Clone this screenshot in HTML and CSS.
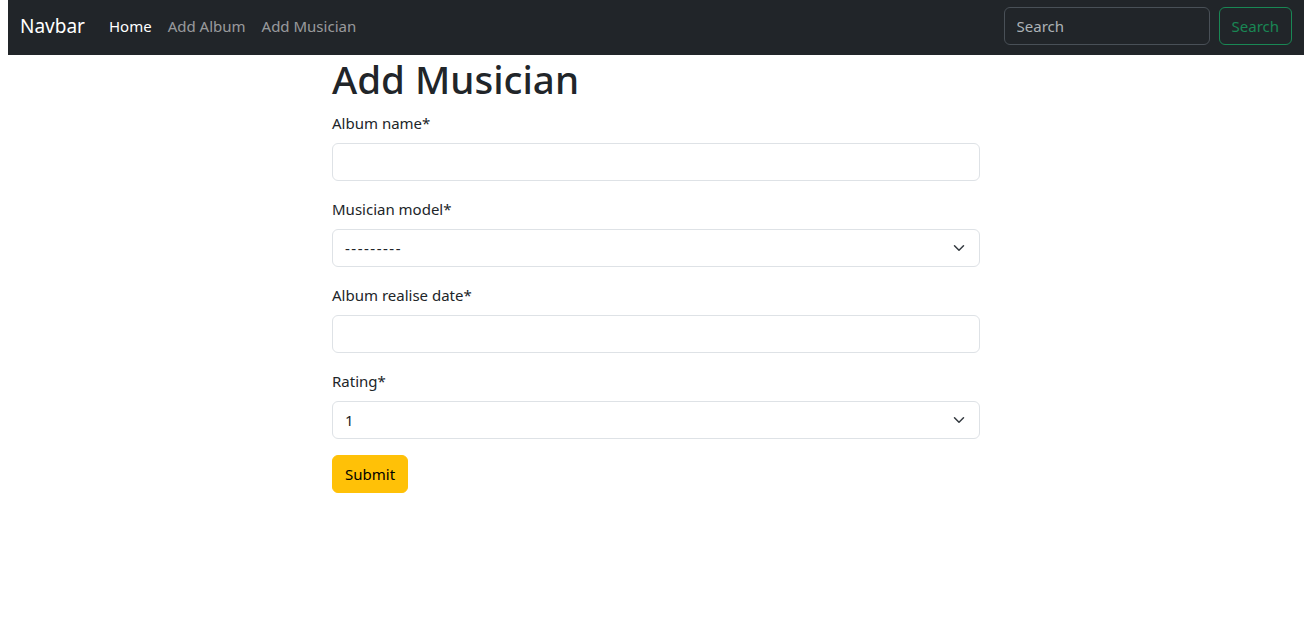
FILE: index.html
```html
<!DOCTYPE html>
<html lang="en">
<head>
<meta charset="utf-8">
<title>Add Musician</title>
<link rel="stylesheet" href="styles.css">
</head>
<body>
<nav class="navbar">
  <div class="nav-left">
    <a class="brand" href="#">Navbar</a>
    <ul class="nav-links">
      <li><a class="nav-link active" href="#">Home</a></li>
      <li><a class="nav-link" href="#">Add Album</a></li>
      <li><a class="nav-link" href="#">Add Musician</a></li>
    </ul>
  </div>
  <form class="search">
    <input class="search-input" type="search" placeholder="Search">
    <button class="search-btn" type="button">Search</button>
  </form>
</nav>
<main class="page">
  <div class="col">
    <h1 class="title">Add Musician</h1>
    <form class="form">
      <div class="field">
        <label class="label">Album name*</label>
        <input class="control" type="text">
      </div>
      <div class="field">
        <label class="label">Musician model*</label>
        <div class="select-wrap">
          <select class="control select dashes"><option>---------</option></select>
          <svg class="chev" viewBox="0 0 16 16" width="16" height="12"><path fill="none" stroke="#343a40" stroke-linecap="round" stroke-linejoin="round" stroke-width="2" d="m2 5 6 6 6-6"/></svg>
        </div>
      </div>
      <div class="field">
        <label class="label">Album realise date*</label>
        <input class="control" type="text">
      </div>
      <div class="field">
        <label class="label">Rating*</label>
        <div class="select-wrap">
          <select class="control select"><option>1</option></select>
          <svg class="chev" viewBox="0 0 16 16" width="16" height="12"><path fill="none" stroke="#343a40" stroke-linecap="round" stroke-linejoin="round" stroke-width="2" d="m2 5 6 6 6-6"/></svg>
        </div>
      </div>
      <button class="submit" type="button">Submit</button>
    </form>
  </div>
</main>
</body>
</html>
```
FILE: styles.css
```css
* { box-sizing: border-box; }
body {
  margin: 0 5px 0 8px;
  font-family: "Noto Sans", "Open Sans", "Liberation Sans", sans-serif;
  font-size: 15px;
  line-height: 24px;
  color: #212529;
  background: #fff;
}
.navbar {
  background: #212529;
  height: 55px;
  padding: 7px 12px 10px;
  display: flex;
  align-items: center;
  justify-content: space-between;
}
.nav-left { display: flex; align-items: center; }
.brand {
  color: #fff;
  text-decoration: none;
  font-size: 19px;
  margin-right: 16px;
  line-height: 30px;
}
.nav-links { list-style: none; margin: 0; padding: 0; display: flex; }
.nav-link {
  display: block;
  padding: 8px 8px;
  color: rgba(255,255,255,.55);
  text-decoration: none;
}
.nav-link.active { color: #fff; }
.search { display: flex; margin: 0; }
.search-input {
  width: 206px;
  height: 38px;
  margin-right: 9px;
  padding: 6px 12px;
  font: inherit;
  color: #dee2e6;
  background: #212529;
  border: 1px solid #495057;
  border-radius: 6px;
}
.search-input::placeholder { color: rgba(222,226,230,.75); }
.search-btn {
  height: 38px;
  padding: 6px 12px;
  font: inherit;
  color: #198754;
  background: transparent;
  border: 1px solid #198754;
  border-radius: 6px;
}
.page { display: flex; justify-content: center; }
.col { width: 648px; }
.title {
  margin: 0 0 8px;
  font-size: 38.5px;
  font-weight: 500;
  line-height: 48px;
}
.form { margin: 0; }
.field { margin-bottom: 16px; }
.label { display: block; margin-bottom: 8px; }
.control {
  display: block;
  width: 100%;
  height: 38px;
  padding: 6px 12px;
  font: inherit;
  color: #212529;
  background: #fff;
  border: 1px solid #dee2e6;
  border-radius: 6px;
}
.select-wrap { position: relative; }
.select { appearance: none; -webkit-appearance: none; padding-right: 36px; }
.dashes { letter-spacing: 1.5px; }
.chev { position: absolute; right: 13px; top: 13px; pointer-events: none; }
.submit {
  height: 38px;
  padding: 6px 12px;
  font: inherit;
  color: #000;
  background: #ffc107;
  border: 1px solid #ffc107;
  border-radius: 6px;
}
```
